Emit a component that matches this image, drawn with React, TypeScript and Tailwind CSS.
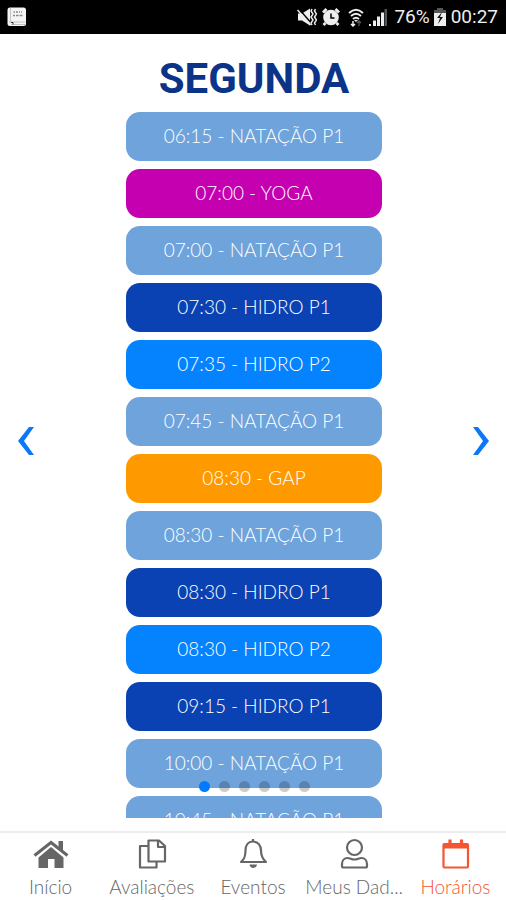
import type { ReactNode } from 'react';

type Lesson = { time: string; name: string; color: string };

const LIGHT = 'bg-[#6ea3dc]';
const NAVY = 'bg-[#0a42b4]';
const BLUE = 'bg-[#0583ff]';

const lessons: Lesson[] = [
  { time: '06:15', name: 'NATAÇÃO P1', color: LIGHT },
  { time: '07:00', name: 'YOGA', color: 'bg-[#c500b0]' },
  { time: '07:00', name: 'NATAÇÃO P1', color: LIGHT },
  { time: '07:30', name: 'HIDRO P1', color: NAVY },
  { time: '07:35', name: 'HIDRO P2', color: BLUE },
  { time: '07:45', name: 'NATAÇÃO P1', color: LIGHT },
  { time: '08:30', name: 'GAP', color: 'bg-[#ff9900]' },
  { time: '08:30', name: 'NATAÇÃO P1', color: LIGHT },
  { time: '08:30', name: 'HIDRO P1', color: NAVY },
  { time: '08:30', name: 'HIDRO P2', color: BLUE },
  { time: '09:15', name: 'HIDRO P1', color: NAVY },
  { time: '10:00', name: 'NATAÇÃO P1', color: LIGHT },
  { time: '10:45', name: 'NATAÇÃO P1', color: LIGHT },
];

const days = ['Segunda', 'Terça', 'Quarta', 'Quinta', 'Sexta', 'Sábado'];

function StatusBar() {
  return (
    <header className="flex h-[34px] shrink-0 items-center bg-black pr-2 pl-[7px] font-['Roboto',sans-serif] text-[19px] text-[#eeeeee]">
      <svg className="mr-auto h-5 w-5" viewBox="0 0 20 20" aria-hidden="true">
        <rect x="0.5" y="0.5" width="18.5" height="18.5" rx="2.5" fill="#f4f4f4" />
        <path d="M3.5 1v13.5M2 15h16.5M4 17.5h14" stroke="#b5b5b5" strokeWidth="0.8" fill="none" />
        <path d="M6.500 5h1.500m1 0h2m1 0h1m1 0h1M6 8.500h2m1 0h2.500m1 0h3" stroke="#888" strokeWidth="1.500" />
        <path d="M4 15.500h2v2" stroke="#333" fill="none" />
      </svg>
      <div className="flex items-center">
        <svg className="mr-[5px] h-5 w-5" viewBox="0 0 20 20" aria-hidden="true">
          <path d="M1 6.500h4l8-5v17l-8-5H1z" fill="#eee" />
          <path d="M1.500 1.500l14 16" stroke="#000" strokeWidth="1.500" />
          <path d="M0.500 3l13 15" stroke="#eee" strokeWidth="1.500" />
          <path d="M15 2l-1 2 2 3-2 3 2 3-2 3 1 2M18.500 2l-1 2 2 3-2 3 2 3-2 3 1 2" stroke="#eee" strokeWidth="1.500" fill="none" />
        </svg>
        <svg className="mr-2 h-[18px] w-[18px]" viewBox="0 0 18 18" aria-hidden="true">
          <path d="M1 4.500L4.500 1M17 4.500L13.500 1M3.500 15L1.500 17M14.500 15l2 2" stroke="#eee" strokeWidth="2.800" />
          <circle cx="9" cy="9.500" r="7.800" fill="#eee" />
          <path d="M9 5.500v4.500h3.500" stroke="#000" strokeWidth="1.500" fill="none" />
        </svg>
        <svg className="mr-[5px] h-[19px] w-4" viewBox="0 0 16 19" fill="none" aria-hidden="true">
          <path d="M1 5q7-6.500 14 0M3 8q5-4.500 10 0M5 11q3-2.500 6 0" stroke="#eee" strokeWidth="1.900" />
          <path d="M6 12h4l-2 2z" fill="#eee" />
          <path d="M5 13v5M3 16l2 2 2-2" stroke="#eee" strokeWidth="1.500" />
          <path d="M11 18v-5M9 15l2-2 2 2" stroke="#555" strokeWidth="1.300" />
        </svg>
        <svg className="mr-[7px] h-[18px] w-[18px]" viewBox="0 0 18 18" aria-hidden="true">
          <path d="M0 16h2v2H0zM4 12.500h3V18H4zM8 8.500h3V18H8zM12 4.500h3V18h-3z" fill="#eee" />
          <path d="M15.500 1h2.500v17h-2.500z" fill="#555" />
        </svg>
        <span>76%</span>
        <svg className="mr-[5px] ml-1 h-[18px] w-3" viewBox="0 0 12 18" aria-hidden="true">
          <path d="M3 0h6v2h3v4H0V2h3z" fill="#555" />
          <path d="M0 5h12v13H0z" fill="#eee" />
          <path d="M8 4L3 10h3l-2 6 5-7H6z" fill="#111" />
        </svg>
        <span>00:27</span>
      </div>
    </header>
  );
}

function Arrow({ label, path }: { label: string; path: string }) {
  return (
    <button type="button" aria-label={label} className="flex w-full items-center justify-center">
      <svg className="h-7 w-4" viewBox="0 0 16 28" aria-hidden="true">
        <path d={path} fill="#0b78f8" />
      </svg>
    </button>
  );
}

function NavIcon({ children }: { children: ReactNode }) {
  return (
    <svg className="h-8 w-9" viewBox="0 0 36 32" fill="none" stroke="currentColor" strokeWidth="2.200" strokeLinejoin="round" aria-hidden="true">
      {children}
    </svg>
  );
}

const tabs: { label: string; active?: boolean; icon: ReactNode }[] = [
  {
    label: 'Início',
    icon: (
      <>
        <path d="M18 9L5.500 19.500v10.500H15v-9h6.500v9h9V19.500z" fill="currentColor" stroke="none" />
        <path d="M1.500 17.500L18 4.500l16.500 13" strokeWidth="3" strokeLinejoin="miter" />
        <path d="M25.500 3H30v10.500l-4.500-3.500z" fill="currentColor" stroke="none" />
      </>
    ),
  },
  {
    label: 'Avaliações',
    icon: (
      <>
        <path d="M14.500 2.500h10.500l6 5.500v15.500H14.500z" />
        <path d="M24 2.500V9h7" />
        <path d="M14 8H6v21.500h16.500V24" />
      </>
    ),
  },
  {
    label: 'Eventos',
    icon: (
      <>
        <path d="M18 1v3M18 3.500c-5 0-7.500 4-7.500 9 0 6-1 8.500-4.500 11.500h25c-3.500-3-5-5.500-5-11.500 0-5-3-9-8-9z" />
        <path d="M14.500 26.500h7.500c-0.500 4.500-7 4.500-7.500 0z" fill="currentColor" stroke="none" />
      </>
    ),
  },
  {
    label: 'Meus Dad...',
    icon: (
      <>
        <circle cx="18.500" cy="9.500" r="7.500" />
        <path d="M11.500 20c3 0 3.500 1.500 7 1.500s4-1.500 7-1.500c3.500 0 5.500 3 5.500 6v2q0 1.500-1.500 1.500h-22Q6 29.500 6 28v-2c0-3 2-6 5.500-6z" />
      </>
    ),
  },
  {
    label: 'Horários',
    active: true,
    icon: (
      <>
        <rect x="6.500" y="6" width="24.500" height="23.500" rx="1" />
        <path d="M6.500 8h24.500" strokeWidth="5" />
        <path d="M13 1.500v5M24.500 1.500v5" strokeWidth="3.200" />
      </>
    ),
  },
];

export default function App() {
  return (
    <div className="flex h-screen flex-col bg-white font-['Lato',sans-serif]">
      <StatusBar />
      <main className="mb-[13px] flex min-h-0 flex-1 justify-between">
        <div className="flex w-[52px] pt-[30px]">
          <Arrow label="Dia anterior" path="M11 0h5L6 14l10 14h-5L0 14z" />
        </div>
        <section className="relative flex min-h-0 flex-col items-center overflow-hidden">
          <h1 className="mt-5 mb-2 shrink-0 font-['Roboto',sans-serif] text-[42px] leading-[50px] font-bold text-[#0b3488]">
            SEGUNDA
          </h1>
          <ul className="flex w-64 flex-col gap-2">
            {lessons.map((l) => (
              <li key={l.time + l.name}>
                <button type="button" className={`h-[49px] w-full rounded-[14px] text-[19px] font-light text-white ${l.color}`}>
                  {l.time} - {l.name}
                </button>
              </li>
            ))}
          </ul>
          <div className="absolute inset-x-0 bottom-[26px] flex justify-center gap-[9px]">
            {days.map((d, i) => (
              <button
                key={d}
                type="button"
                aria-label={d}
                className={`h-[11px] w-[11px] rounded-full ${i === 0 ? 'bg-[#007aff]' : 'bg-black/20'}`}
              />
            ))}
          </div>
        </section>
        <div className="flex w-[50px] pt-[30px]">
          <Arrow label="Próximo dia" path="M0 0h5l11 14L5 28H0l10-14z" />
        </div>
      </main>
      <nav className="grid h-[69px] shrink-0 grid-cols-5 border-t-2 border-[#ececec]">
        {tabs.map((t) => (
          <a
            key={t.label}
            href="#"
            aria-current={t.active ? 'page' : undefined}
            className={`flex flex-col items-center pt-[5px] ${t.active ? 'text-[#f45532]' : 'text-[#666666]'}`}
          >
            <NavIcon>{t.icon}</NavIcon>
            <span className="mt-[5px] text-[19px] leading-6 font-light whitespace-nowrap">{t.label}</span>
          </a>
        ))}
      </nav>
    </div>
  );
}
